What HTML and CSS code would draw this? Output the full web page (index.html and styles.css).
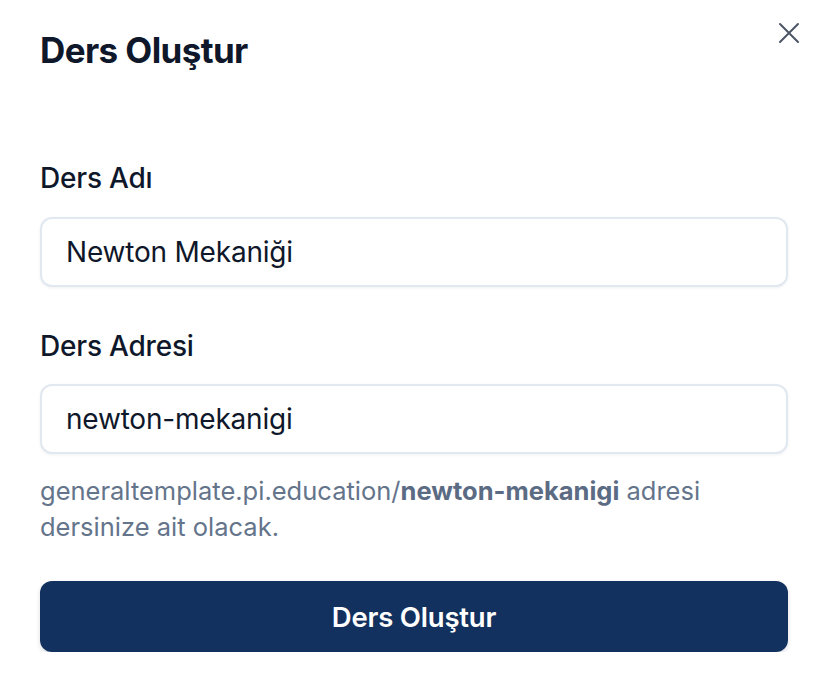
FILE: index.html
```html
<!DOCTYPE html>
<html>
  <head>
    <title>Ders Oluştur</title>
    <meta name="viewport" content="width=device-width, initial-scale=1.0" />
    <link rel="stylesheet" href="styles.css">
  </head>
  <body>
    <div class="modal">
      <header class="modal-head">
        <h2>Ders Oluştur</h2>
        <button class="close" aria-label="Kapat">
          <svg width="24" height="24" viewBox="0 0 24 24" fill="none" stroke="currentColor" stroke-width="2" stroke-linecap="round">
            <path d="M3 3L21 21M21 3L3 21" />
          </svg>
        </button>
      </header>
      <form class="form">
        <label class="field">
          <span class="label">Ders Adı</span>
          <input type="text" value="Newton Mekaniği" />
        </label>
        <label class="field">
          <span class="label">Ders Adresi</span>
          <input type="text" value="newton-mekanigi" />
        </label>
        <p class="hint">
          generaltemplate.pi.education/<b>newton-mekanigi</b> adresi dersinize ait olacak.
        </p>
        <button type="button" class="submit">Ders Oluştur</button>
      </form>
    </div>
  </body>
</html>
```

FILE: styles.css
```css
body {
  margin: 0;
  font-family: Inter, "Noto Sans", sans-serif;
  color: #0f172a;
  background: #fff;
}

.modal {
  padding: 24px 46px 0 40px;
}

.modal-head {
  display: flex;
  justify-content: space-between;
  align-items: flex-start;
}

.modal-head h2 {
  margin: 0;
  font-size: 35px;
  font-weight: 700;
  line-height: 52px;
  letter-spacing: -0.6px;
}

.close {
  border: none;
  background: none;
  padding: 0;
  margin: -3px -13px 0 0;
  color: #4b5563;
  cursor: pointer;
}

.form {
  margin-top: 84px;
}

.field {
  display: block;
}

.label {
  display: block;
  font-size: 28px;
  font-weight: 500;
  line-height: 36px;
  margin-bottom: 21px;
  letter-spacing: -0.2px;
}

input {
  box-sizing: border-box;
  width: 100%;
  height: 70px;
  border: 2px solid #e2e8f0;
  border-radius: 12px;
  box-shadow: 0 1px 3px rgba(15, 23, 42, 0.06);
  padding: 0 24px;
  font-family: inherit;
  font-size: 28px;
  letter-spacing: -0.2px;
  color: #0f172a;
  margin-bottom: 41px;
}

.field + .field .label {
  margin-bottom: 20px;
}

.field + .field input {
  margin-bottom: 19px;
}

.hint {
  margin: 0;
  max-width: 690px;
  font-size: 25.5px;
  line-height: 36px;
  color: #64748b;
}

.hint b {
  color: #5b6b84;
  font-weight: 700;
}

.submit {
  display: block;
  width: 100%;
  height: 71px;
  margin-top: 36px;
  border: none;
  border-radius: 12px;
  background: #13315e;
  color: #fff;
  font-family: inherit;
  font-size: 27.5px;
  font-weight: 600;
  letter-spacing: -0.2px;
  box-shadow: 0 2px 4px rgba(15, 23, 42, 0.15);
}
```
